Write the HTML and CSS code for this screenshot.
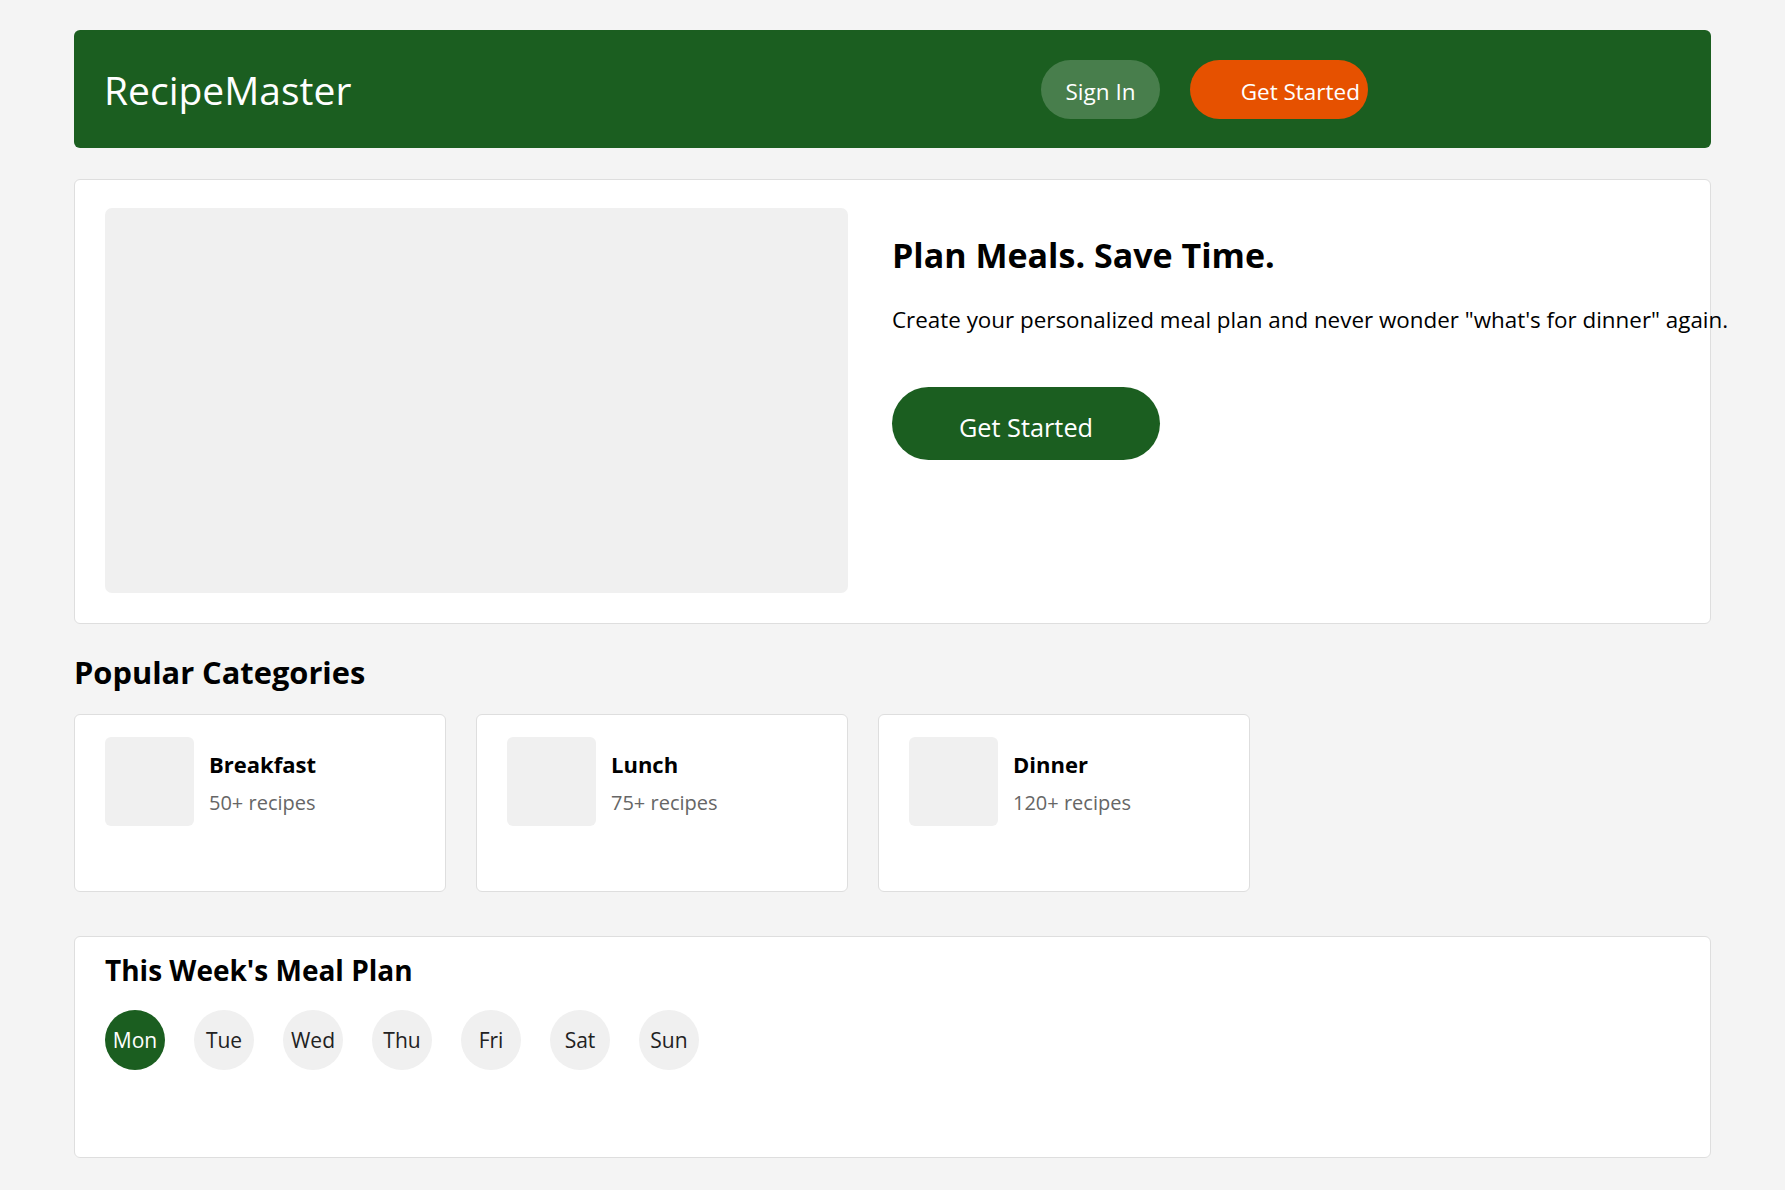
FILE: index.html
```html
<!DOCTYPE html>
<html lang="en">
<head>
<meta charset="utf-8">
<title>RecipeMaster</title>
<link rel="stylesheet" href="styles.css">
</head>
<body>
<div class="page">
  <header class="topbar">
    <div class="brand">RecipeMaster</div>
    <nav class="nav">
      <button class="btn-signin">Sign In</button>
      <button class="btn-start">Get Started</button>
    </nav>
  </header>

  <section class="hero">
    <div class="hero-img"></div>
    <div class="hero-text">
      <h1 class="hero-title">Plan Meals. Save Time.</h1>
      <p class="hero-desc">Create your personalized meal plan and never wonder "what's for dinner" again.</p>
      <button class="hero-btn">Get Started</button>
    </div>
  </section>

  <section class="categories">
    <h2 class="section-title">Popular Categories</h2>
    <div class="cat-grid">
      <div class="cat-card">
        <div class="cat-thumb"></div>
        <div class="cat-info">
          <div class="cat-name">Breakfast</div>
          <div class="cat-count">50+ recipes</div>
        </div>
      </div>
      <div class="cat-card">
        <div class="cat-thumb"></div>
        <div class="cat-info">
          <div class="cat-name">Lunch</div>
          <div class="cat-count">75+ recipes</div>
        </div>
      </div>
      <div class="cat-card">
        <div class="cat-thumb"></div>
        <div class="cat-info">
          <div class="cat-name">Dinner</div>
          <div class="cat-count">120+ recipes</div>
        </div>
      </div>
    </div>
  </section>

  <section class="plan">
    <h2 class="plan-title">This Week's Meal Plan</h2>
    <div class="days">
      <div class="day day-active">Mon</div>
      <div class="day">Tue</div>
      <div class="day">Wed</div>
      <div class="day">Thu</div>
      <div class="day">Fri</div>
      <div class="day">Sat</div>
      <div class="day">Sun</div>
    </div>
  </section>
</div>
</body>
</html>
```

FILE: styles.css
```css
* { box-sizing: border-box; }

body {
  margin: 0;
  background: #f4f4f4;
  font-family: "Segoe UI", "Open Sans", sans-serif;
  color: #000;
}

.page {
  width: 1637px;
  margin: 30px 0 0 74px;
  display: flex;
  flex-direction: column;
}

.topbar {
  height: 118px;
  background: #1b5e20;
  border-radius: 6px;
  padding: 0 30px;
  display: flex;
  align-items: center;
}

.brand {
  color: #fff;
  font-size: 39px;
  line-height: 1;
}

.nav {
  margin-left: auto;
  margin-right: 313px;
  display: flex;
  gap: 30px;
}

.nav button {
  border: none;
  height: 59px;
  border-radius: 30px;
  color: #fff;
  font-family: inherit;
  font-size: 22.5px;
  line-height: 1;
  cursor: pointer;
}

.btn-signin {
  background: rgba(255, 255, 255, 0.2);
  width: 119px;
  padding: 6px 0 0;
}

.btn-start {
  background: #e65100;
  width: 178px;
  padding: 6px 8px 0 40px;
  text-align: right;
  white-space: nowrap;
}

.hero {
  margin-top: 31px;
  background: #fff;
  border: 1px solid #dedede;
  border-radius: 6px;
  padding: 28px 30px 30px;
  display: flex;
  gap: 44px;
}

.hero-img {
  flex: 0 0 743px;
  height: 385px;
  background: #f0f0f0;
  border-radius: 7px;
}

.hero-text {
  padding-top: 23px;
}

.hero-title {
  margin: 0;
  font-size: 34px;
  line-height: 48px;
  font-weight: 700;
}

.hero-desc {
  margin: 26px 0 52px;
  font-size: 22.4px;
  line-height: 30px;
  white-space: nowrap;
}

.hero-btn {
  width: 268px;
  height: 73px;
  border: none;
  border-radius: 37px;
  background: #1b5e20;
  color: #fff;
  font-family: inherit;
  font-size: 25.3px;
  line-height: 1;
  padding: 8px 0 0;
  cursor: pointer;
}

.categories {
  margin-top: 30px;
}

.section-title {
  margin: 0 0 24px;
  font-size: 30.8px;
  line-height: 36px;
  font-weight: 700;
}

.cat-grid {
  display: grid;
  grid-template-columns: repeat(3, 372px);
  gap: 30px;
}

.cat-card {
  height: 178px;
  background: #fff;
  border: 1px solid #dedede;
  border-radius: 6px;
  padding: 22px 30px;
  display: flex;
  gap: 15px;
  align-items: flex-start;
}

.cat-thumb {
  flex: 0 0 89px;
  height: 89px;
  background: #f0f0f0;
  border-radius: 6px;
}

.cat-info {
  padding-top: 12px;
}

.cat-name {
  font-size: 22px;
  line-height: 30px;
  font-weight: 700;
}

.cat-count {
  margin-top: 11px;
  font-size: 20px;
  line-height: 26px;
  color: #666;
}

.plan {
  margin-top: 44px;
  background: #fff;
  border: 1px solid #dedede;
  border-radius: 6px;
  padding: 15px 30px 87px;
}

.plan-title {
  margin: 0 0 22px;
  font-size: 28px;
  line-height: 36px;
  font-weight: 700;
}

.days {
  display: flex;
  gap: 29px;
}

.day {
  width: 60px;
  height: 60px;
  border-radius: 50%;
  background: #f0f0f0;
  display: flex;
  align-items: center;
  justify-content: center;
  font-size: 21px;
  color: #222;
}

.day-active {
  background: #1b5e20;
  color: #fff;
}
```
